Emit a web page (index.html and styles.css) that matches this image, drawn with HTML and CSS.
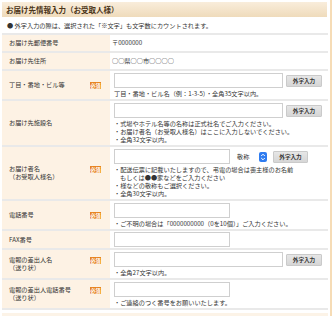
FILE: index.html
```html
<!DOCTYPE html>
<html lang="ja">

<head>
    <meta charset="UTF-8">
    <meta name="viewport" content="width=device-width, initial-scale=1.0">
    <title>お届け先情報入力</title>
    <link rel="stylesheet" href="styles.css">
</head>

<body>
    <div class="wrap">
        <div class="title">お届け先情報入力（お受取人様）</div>
        <p class="notice">● 外字入力の際は、選択された「※文字」も文字数にカウントされます。</p>
        <div class="form">
            <div class="row">
                <div class="th"><div class="th-in"><span class="label">お届け先郵便番号</span></div></div>
                <div class="td plain">〒0000000</div>
            </div>
            <div class="row">
                <div class="th"><div class="th-in"><span class="label">お届け先住所</span></div></div>
                <div class="td plain">○○県○○市○○○○</div>
            </div>
            <div class="row">
                <div class="th"><div class="th-in"><span class="label">丁目・番地・ビル等</span><span class="req">必須</span></div></div>
                <div class="td">
                    <div class="line">
                        <input type="text" class="txt long">
                        <button type="button" class="gaiji">外字入力</button>
                    </div>
                    <p class="note">丁目・番地・ビル名（例：1-3-5）・全角35文字以内。</p>
                </div>
            </div>
            <div class="row">
                <div class="th"><div class="th-in"><span class="label">お届け先施設名</span></div></div>
                <div class="td">
                    <div class="line">
                        <input type="text" class="txt long">
                        <button type="button" class="gaiji">外字入力</button>
                    </div>
                    <p class="note">・式場やホテル名等の名称は正式社名でご入力ください。<br>・お届け者名（お受取人様名）はここに入力しないでください。<br>・全角32文字以内。</p>
                </div>
            </div>
            <div class="row">
                <div class="th"><div class="th-in"><span class="label">お届け者名<br>（お受取人様名）</span><span class="req">必須</span></div></div>
                <div class="td">
                    <div class="line">
                        <input type="text" class="txt short">
                        <div class="select">敬称<span class="arrow"><svg width="6" height="8" viewBox="0 0 6 8"><path d="M1.2 3 L3 1.2 L4.8 3 M1.2 5 L3 6.8 L4.8 5" fill="none" stroke="#fff" stroke-width="1"/></svg></span></div>
                        <button type="button" class="gaiji narrow">外字入力</button>
                    </div>
                    <p class="note">・配送伝票に記載いたしますので、弔電の場合は喪主様のお名前<br><span class="indent">もしくは●●家などをご入力ください</span><br>・様などの敬称もご選択ください。<br>・全角30文字以内。</p>
                </div>
            </div>
            <div class="row">
                <div class="th"><div class="th-in"><span class="label">電話番号</span><span class="req">必須</span></div></div>
                <div class="td">
                    <div class="line">
                        <input type="text" class="txt short">
                    </div>
                    <p class="note">・ご不明の場合は「0000000000（0を10個）」ご入力ください。</p>
                </div>
            </div>
            <div class="row">
                <div class="th"><div class="th-in"><span class="label">FAX番号</span></div></div>
                <div class="td slim">
                    <div class="line">
                        <input type="text" class="txt short">
                    </div>
                </div>
            </div>
            <div class="row">
                <div class="th"><div class="th-in"><span class="label">電報の差出人名<br>（送り状）</span><span class="req">必須</span></div></div>
                <div class="td">
                    <div class="line">
                        <input type="text" class="txt long">
                        <button type="button" class="gaiji">外字入力</button>
                    </div>
                    <p class="note">・全角27文字以内。</p>
                </div>
            </div>
            <div class="row">
                <div class="th"><div class="th-in"><span class="label">電報の差出人電話番号<br>（送り状）</span><span class="req">必須</span></div></div>
                <div class="td">
                    <div class="line">
                        <input type="text" class="txt short">
                    </div>
                    <p class="note">・ご連絡のつく番号をお願いいたします。</p>
                </div>
            </div>
        </div>
        <div class="next"></div>
    </div>
</body>

</html>
```

FILE: styles.css
```css
* {
    margin: 0px;
    padding: 0px;
    box-sizing: border-box;
}

body {
    font-family: "Noto Sans CJK JP", "Noto Sans", sans-serif;
    font-size: 6.2px;
    color: #333;
    background: #fff;
}

.wrap {
    width: 332px;
    height: 316px;
    padding: 2px 2px 0px 2px;
    border-right: 2px solid #f6dcb6;
    overflow: hidden;
}

.title {
    height: 15px;
    line-height: 15px;
    margin-right: 1px;
    padding-left: 4px;
    font-size: 7.5px;
    font-weight: 700;
    color: #4a3418;
    background: linear-gradient(#f9eddb, #efdbbb);
}

.notice {
    padding: 2px 0px 0px 5px;
    height: 16px;
    line-height: 14px;
}

.form {
    border-top: 2px solid #e9e9e9;
}

.row {
    display: flex;
    border-bottom: 2px solid #e9e9e9;
}

.th {
    width: 108px;
    background: #fdf2e4;
    display: flex;
    align-items: center;
    padding: 0px 9px 0px 7px;
}

.th-in {
    display: flex;
    align-items: flex-start;
    width: 100%;
}

.label {
    flex: 1;
    line-height: 8px;
}

.req {
    width: 11px;
    height: 7px;
    margin-top: 0.5px;
    line-height: 7px;
    font-size: 5.2px;
    font-weight: 700;
    text-align: center;
    color: #fff;
    background: #e7831f;
}

.td {
    flex: 1;
    padding: 2px 4px 1px 4px;
}

.td.plain {
    padding: 0px 2px;
    line-height: 16px;
}

.td.slim {
    padding: 1px 4px;
}

.line {
    display: flex;
    align-items: center;
    height: 15px;
}

.txt {
    height: 15px;
    border: 1px solid #cfcfcf;
    background: #fff;
    outline: none;
}

.txt.long {
    width: 169px;
}

.txt.short {
    width: 116px;
}

.gaiji {
    width: 36px;
    height: 12px;
    margin-left: 3px;
    font-family: inherit;
    font-size: 5.6px;
    font-weight: 700;
    color: #333;
    border: 1px solid #cacaca;
    border-radius: 1px;
    background: linear-gradient(#e6e6e6, #d6d6d6);
}

.gaiji.narrow {
    width: 35px;
    margin-left: 6px;
}

.select {
    display: flex;
    align-items: center;
    width: 34px;
    height: 12px;
    margin-left: 3px;
    padding-left: 4px;
}

.select .arrow {
    display: flex;
    align-items: center;
    justify-content: center;
    width: 8px;
    height: 10px;
    margin-left: auto;
    border-radius: 2px;
    background: #2f7cf0;
}

.note {
    margin-top: 2px;
    line-height: 8px;
}

.indent {
    padding-left: 6px;
}

.next {
    height: 10px;
    margin-top: 3px;
    background: #fcf3e7;
}
```
